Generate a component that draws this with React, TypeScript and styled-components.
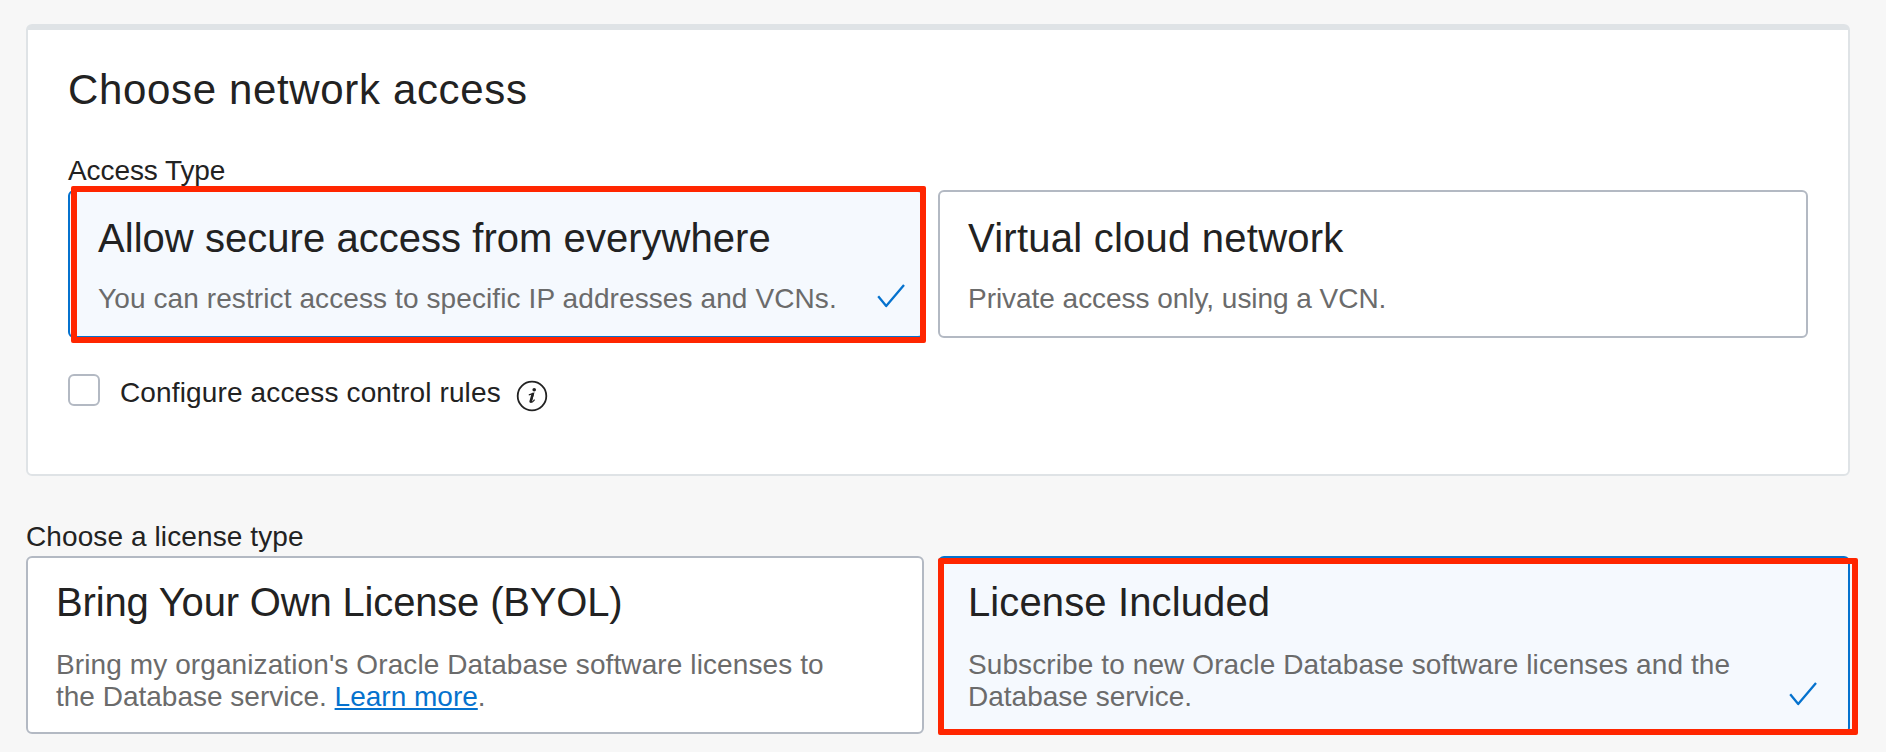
import React from "react";
import styled, { createGlobalStyle } from "styled-components";

const GlobalStyle = createGlobalStyle`
  *, *::before, *::after { box-sizing: border-box; }
  body {
    margin: 0;
    background: #f7f7f7;
    color: #222;
    font-family: "Liberation Sans", Arial, sans-serif;
    font-size: 28px;
    line-height: 32px;
  }
`;

const Page = styled.main`
  height: 752px;
  padding: 24px 36px 0 26px;
  overflow: hidden;
`;

const Panel = styled.section`
  height: 452px;
  padding: 35px 40px 0;
  background: #fff;
  border: 2px solid #dfe3e6;
  border-top-width: 6px;
  border-radius: 6px;
`;

const PanelTitle = styled.h2`
  margin: 0 0 40px;
  font-size: 42px;
  font-weight: 400;
  line-height: 50px;
  letter-spacing: 0.65px;
`;

const FieldLabel = styled.div<{ $spacing: number }>`
  margin-bottom: 3px;
  letter-spacing: ${(p) => p.$spacing}px;
`;

const LicenseSection = styled.section`
  margin-top: 45px;
`;

const CardRow = styled.div<{ $first: number; $height: number }>`
  display: grid;
  grid-template-columns: ${(p) => p.$first}px 1fr;
  gap: 14px;
  height: ${(p) => p.$height}px;
`;

const Card = styled.div<{ $selected?: boolean; $top: number }>`
  position: relative;
  padding: ${(p) => p.$top}px 28px 0;
  background: ${(p) => (p.$selected ? "#f5f9fe" : "#fff")};
  border: 2px solid ${(p) => (p.$selected ? "#0572ce" : "#b3b9c3")};
  border-radius: 6px;
`;

const CardTitle = styled.h3<{ $gap: number; $spacing: number }>`
  margin: 0 0 ${(p) => p.$gap}px;
  font-size: 40px;
  font-weight: 400;
  line-height: 48px;
  white-space: nowrap;
  letter-spacing: ${(p) => p.$spacing}px;
`;

const CardText = styled.p`
  margin: 0;
  color: #6b6b6b;
  white-space: nowrap;
`;

const TextLine = styled.span<{ $spacing?: number }>`
  display: block;
  letter-spacing: ${(p) => p.$spacing ?? 0}px;
`;

const Link = styled.a`
  color: #0572ce;
  text-decoration: underline;
  text-decoration-thickness: 2px;
  text-underline-offset: 2px;
  text-decoration-skip-ink: none;
`;

const Highlight = styled.span<{ $inset: string }>`
  position: absolute;
  inset: ${(p) => p.$inset};
  border: 6px solid #ff2600;
  border-radius: 2px;
  pointer-events: none;
`;

const CheckSvg = styled.svg`
  position: absolute;
  right: 16px;
  bottom: 26px;
  width: 30px;
  height: 28px;
`;

const LicenseCheckSvg = styled(CheckSvg)`
  right: 30px;
  bottom: 24px;
`;

const CheckPath = () => (
  <path d="M2.2 14.2 10.2 24 28 3" fill="none" stroke="#0572ce" strokeWidth="2.3" strokeLinejoin="round" />
);

const CheckRow = styled.label`
  display: flex;
  align-items: flex-start;
  margin-top: 36px;
`;

const Checkbox = styled.span`
  width: 32px;
  height: 32px;
  border: 2px solid #b3b9c3;
  border-radius: 6px;
`;

const CheckLabel = styled.span`
  margin: 3px 15px 0 20px;
  letter-spacing: 0.14px;
`;

const InfoSvg = styled.svg`
  width: 32px;
  height: 32px;
  margin-top: 6px;
`;

export default function App() {
  return (
    <>
      <GlobalStyle />
      <Page>
        <Panel>
          <PanelTitle>Choose network access</PanelTitle>
          <FieldLabel $spacing={-0.08}>Access Type</FieldLabel>
          <CardRow $first={856} $height={148}>
            <Card $selected $top={22}>
              <CardTitle $gap={21} $spacing={0.04}>Allow secure access from everywhere</CardTitle>
              <CardText>
                <TextLine $spacing={0.1}>You can restrict access to specific IP addresses and VCNs.</TextLine>
              </CardText>
              <CheckSvg viewBox="0 0 30 28"><CheckPath /></CheckSvg>
              <Highlight $inset="-6px -4px -7px 1px" />
            </Card>
            <Card $top={22}>
              <CardTitle $gap={21} $spacing={0.24}>Virtual cloud network</CardTitle>
              <CardText>
                <TextLine $spacing={-0.04}>Private access only, using a VCN.</TextLine>
              </CardText>
            </Card>
          </CardRow>
          <CheckRow>
            <Checkbox />
            <CheckLabel>Configure access control rules</CheckLabel>
            <InfoSvg viewBox="0 0 32 32">
              <circle cx="16" cy="16" r="14.3" fill="none" stroke="#222" strokeWidth="1.8" />
              <circle cx="18.2" cy="9.7" r="1.8" fill="#222" />
              <path d="M12.8 14.8C14.6 14.5 16 14.1 17.6 13.3L15.3 21.4C15.1 22.9 16.8 22.1 18.6 19.6" fill="none" stroke="#222" strokeWidth="1.2" />
              <path d="M16.7 14 14.6 21.6" fill="none" stroke="#222" strokeWidth="2.5" strokeLinecap="round" />
            </InfoSvg>
          </CheckRow>
        </Panel>
        <LicenseSection>
          <FieldLabel $spacing={0.1}>Choose a license type</FieldLabel>
          <CardRow $first={898} $height={178}>
            <Card $top={20}>
              <CardTitle $gap={23} $spacing={-0.17}>Bring Your Own License (BYOL)</CardTitle>
              <CardText>
                <TextLine $spacing={0.1}>Bring my organization's Oracle Database software licenses to</TextLine>
                <TextLine>the Database service. <Link>Learn more</Link>.</TextLine>
              </CardText>
            </Card>
            <Card $selected $top={20}>
              <CardTitle $gap={23} $spacing={0.12}>License Included</CardTitle>
              <CardText>
                <TextLine $spacing={0.1}>Subscribe to new Oracle Database software licenses and the</TextLine>
                <TextLine>Database service.</TextLine>
              </CardText>
              <LicenseCheckSvg viewBox="0 0 30 28"><CheckPath /></LicenseCheckSvg>
              <Highlight $inset="0 -10px -3px -2px" />
            </Card>
          </CardRow>
        </LicenseSection>
      </Page>
    </>
  );
}
